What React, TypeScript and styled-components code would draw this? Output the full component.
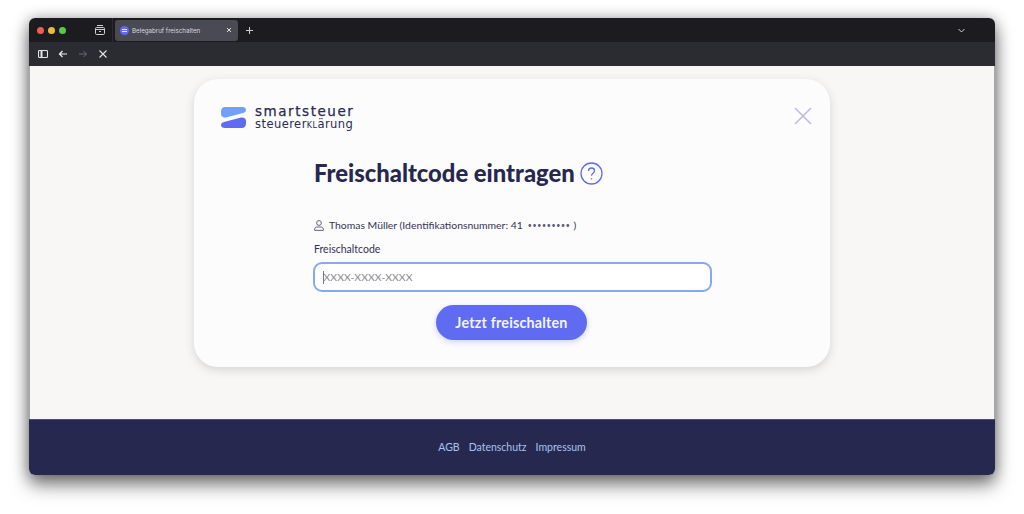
import React from "react";
import styled, { createGlobalStyle } from "styled-components";

const Global = createGlobalStyle`
  html, body { margin: 0; padding: 0; background: #ffffff; width: 1024px; height: 514px; overflow: hidden; }
  * { box-sizing: border-box; }
  body { font-family: "Lato", "Liberation Sans", sans-serif; }
`;

const Page = styled.div`
  width: 1024px;
  height: 514px;
  padding: 18px 29px 39px;
`;

const Win = styled.div`
  width: 966px;
  height: 457px;
  border-radius: 6px;
  overflow: hidden;
  display: flex;
  flex-direction: column;
  box-shadow: 0 10px 18px rgba(0, 0, 0, 0.5), 0 0 14px rgba(0, 0, 0, 0.3);
`;

const TabBar = styled.div`
  height: 24px;
  background: #1b1b20;
  display: flex;
  align-items: center;
  padding-left: 8px;
  flex: none;
`;

const Light = styled.span<{ $c: string }>`
  width: 7px;
  height: 7px;
  border-radius: 50%;
  background: ${(p) => p.$c};
  margin-right: 4px;
  flex: none;
`;

const TabGroupIcon = styled.svg`
  width: 12px;
  height: 12px;
  margin-left: 24px;
  flex: none;
`;

const Divider = styled.span`
  width: 1px;
  height: 24px;
  background: #2b2b31;
  margin-left: 6px;
  flex: none;
`;

const Tab = styled.div`
  width: 123px;
  height: 21px;
  margin-left: 2px;
  background: #4a4a55;
  border-radius: 3px;
  display: flex;
  align-items: center;
  padding: 0 5px;
  flex: none;
`;

const Favicon = styled.span`
  width: 9px;
  height: 9px;
  border-radius: 50%;
  background: #5f6cf0;
  display: flex;
  flex-direction: column;
  align-items: center;
  justify-content: center;
  gap: 1px;
  flex: none;
`;

const FavBar = styled.span`
  width: 5px;
  height: 1px;
  background: #e8eaff;
`;

const TabTitle = styled.span`
  font-family: "Inter", "Liberation Sans", sans-serif;
  font-size: 6.2px;
  color: #d8d8de;
  margin-left: 3px;
  flex: 1;
  white-space: nowrap;
`;

const Glyph = styled.svg<{ $ml?: number; $mr?: number }>`
  flex: none;
  margin-left: ${(p) => p.$ml ?? 0}px;
  margin-right: ${(p) => p.$mr ?? 0}px;
`;

const Spacer = styled.span`
  flex: 1;
`;

const ToolBar = styled.div`
  height: 24px;
  background: #2b2b32;
  display: flex;
  align-items: center;
  padding-left: 9px;
  flex: none;
`;

const Content = styled.div`
  height: 353px;
  background: #f8f7f5;
  border-left: 1px solid #a8a8a8;
  border-right: 1px solid #a8a8a8;
  padding-top: 13px;
  display: flex;
  justify-content: center;
  flex: none;
`;

const Card = styled.div`
  width: 636px;
  height: 288px;
  background: #fdfcfd;
  border-radius: 24px;
  box-shadow: 0 3px 10px rgba(60, 60, 70, 0.18);
  display: flex;
  flex-direction: column;
  padding: 26px 17px 0 27px;
`;

const CardHead = styled.div`
  display: flex;
  justify-content: space-between;
  align-items: flex-start;
`;

const Logo = styled.div`
  display: flex;
  align-items: center;
  gap: 9px;
`;

const LogoText = styled.div`
  display: flex;
  flex-direction: column;
  font-family: "DejaVu Sans", "Liberation Sans", sans-serif;
  color: #2a2a52;
`;

const LogoTop = styled.span`
  font-size: 13.5px;
  font-weight: 400;
  line-height: 13px;
  letter-spacing: 1.55px;
  -webkit-text-stroke: 0.25px #2a2a52;
`;

const LogoBottom = styled.span`
  font-size: 11.5px;
  font-weight: 400;
  line-height: 12px;
  letter-spacing: 0.45px;
`;

const LogoCaps = styled.span`
  font-variant: small-caps;
`;

const CloseIcon = styled.svg`
  width: 20px;
  height: 20px;
  margin-top: 1px;
`;

const Form = styled.div`
  width: 398px;
  margin-left: 93px;
  margin-top: 28px;
  display: flex;
  flex-direction: column;
`;

const TitleRow = styled.div`
  display: flex;
  align-items: center;
  gap: 5px;
  height: 30px;
`;

const Title = styled.h1`
  margin: 0;
  font-family: "Lato", sans-serif;
  font-size: 23.8px;
  font-weight: 900;
  color: #27274f;
  white-space: nowrap;
`;

const UserRow = styled.div`
  display: flex;
  align-items: center;
  margin-top: 29px;
  height: 16px;
  font-size: 10.4px;
  color: #33334f;
  white-space: nowrap;
`;

const UserName = styled.span`
  margin-left: 5px;
`;

const Masked = styled.span`
  font-size: 7px;
  letter-spacing: 0.7px;
  margin: 0 3px 0 5px;
  color: #555570;
`;

const Label = styled.label`
  font-size: 10.5px;
  color: #33334f;
  margin-top: 9px;
  height: 15px;
  line-height: 15px;
`;

const Field = styled.div`
  margin: 5px 0 0 -1px;
  height: 30px;
  border: 2.5px solid #86a8ec;
  border-radius: 9px;
  background: #ffffff;
  display: flex;
  align-items: center;
  padding-left: 7.5px;
  font-size: 10.4px;
  letter-spacing: 0.1px;
  color: #85858f;
`;

const Caret = styled.span`
  width: 1px;
  height: 13px;
  background: #777;
`;

const Submit = styled.button`
  align-self: center;
  margin: 13px 0 0 -3px;
  width: 151px;
  height: 35px;
  border: none;
  border-radius: 18px;
  background: #5f6cf2;
  color: #f4f4ff;
  font-family: "Lato", sans-serif;
  font-size: 14.3px;
  font-weight: 700;
  letter-spacing: 0.2px;
  box-shadow: 0 2px 6px rgba(95, 108, 242, 0.3);
`;

const Footer = styled.div`
  height: 56px;
  background: #27284f;
  border-top: 1px solid #4c4c70;
  display: flex;
  align-items: center;
  justify-content: center;
  gap: 9px;
  flex: none;
  padding-bottom: 1px;
`;

const FootLink = styled.a`
  font-size: 10.5px;
  color: #a8c4f0;
`;

export default function App() {
  return (
    <>
      <Global />
      <Page>
        <Win>
          <TabBar>
            <Light $c="#ec5f56" />
            <Light $c="#f0b73f" />
            <Light $c="#5bc64f" />
            <TabGroupIcon viewBox="0 0 12 12" fill="none" stroke="#cfcfd4" strokeWidth="1">
              <rect x="1.5" y="3.5" width="9" height="7" rx="1.2" />
              <path d="M3 1.5h6M1.5 5.5h9M5 7.5h2" />
            </TabGroupIcon>
            <Divider />
            <Tab>
              <Favicon>
                <FavBar />
                <FavBar />
              </Favicon>
              <TabTitle>Belegabruf freischalten</TabTitle>
              <Glyph width="8" height="8" viewBox="0 0 8 8" stroke="#e0e0e4" strokeWidth="1" fill="none">
                <path d="M2 2l4 4M6 2l-4 4" />
              </Glyph>
            </Tab>
            <Glyph $ml={7} width="9" height="9" viewBox="0 0 9 9" stroke="#cfcfd4" strokeWidth="1" fill="none">
              <path d="M4.5 1v7M1 4.5h7" />
            </Glyph>
            <Spacer />
            <Glyph $mr={29} width="9" height="9" viewBox="0 0 9 9" stroke="#cfcfd4" strokeWidth="1" fill="none">
              <path d="M1.5 3l3 3 3-3" />
            </Glyph>
          </TabBar>
          <ToolBar>
            <Glyph width="10" height="10" viewBox="0 0 10 10" fill="none" stroke="#e4e4e8" strokeWidth="1.1">
              <rect x="0.5" y="1.5" width="9" height="7" rx="1" />
              <path d="M3.5 1.5v7" strokeWidth="2" />
            </Glyph>
            <Glyph $ml={10} width="10" height="10" viewBox="0 0 10 10" fill="none" stroke="#f0f0f4" strokeWidth="1.2">
              <path d="M9 5H1.5M4.5 2L1.5 5l3 3" />
            </Glyph>
            <Glyph $ml={10} width="10" height="10" viewBox="0 0 10 10" fill="none" stroke="#6a6a72" strokeWidth="1">
              <path d="M1 5h7.5M5.5 2l3 3-3 3" />
            </Glyph>
            <Glyph $ml={10} width="10" height="10" viewBox="0 0 10 10" fill="none" stroke="#e4e4e8" strokeWidth="1.1">
              <path d="M1.5 1.5l7 7M8.5 1.5l-7 7" />
            </Glyph>
          </ToolBar>
          <Content>
            <Card>
              <CardHead>
                <Logo>
                  <svg width="25" height="21" viewBox="0 0 25 21">
                    <path d="M4 0H21c2.5 0 4 1.2 4 3 0 1.6-1.3 2.6-3 3L5 10.5C2 11 0 9.5 0 7V4.5C0 2 1.5 0 4 0z" fill="#6ea2f8" />
                    <path d="M4 0H21c2.5 0 4 1.2 4 3 0 1.6-1.3 2.6-3 3L5 10.5C2 11 0 9.5 0 7V4.5C0 2 1.5 0 4 0z" fill="#5f6cf2" transform="rotate(180 12.5 10.5)" />
                  </svg>
                  <LogoText>
                    <LogoTop>smartsteuer</LogoTop>
                    <LogoBottom>steuerer<LogoCaps>kl</LogoCaps>ärung</LogoBottom>
                  </LogoText>
                </Logo>
                <CloseIcon viewBox="0 0 20 20" fill="none" stroke="#b9b6ee" strokeWidth="1.5">
                  <path d="M2 2l16 16M18 2L2 18" />
                </CloseIcon>
              </CardHead>
              <Form>
                <TitleRow>
                  <Title>Freischaltcode eintragen</Title>
                  <svg width="23" height="23" viewBox="0 0 23 23" fill="none" stroke="#5f6cf2" strokeWidth="1.3">
                    <circle cx="11.5" cy="11.5" r="10.5" />
                    <path d="M8.5 9c0-1.8 1.3-3 3-3s3 1.2 3 2.8c0 2.4-3 2.4-3 5" />
                    <path d="M11.5 16.2v1.3" />
                  </svg>
                </TitleRow>
                <UserRow>
                  <svg width="10" height="11" viewBox="0 0 10 11" fill="none" stroke="#55556e" strokeWidth="0.9">
                    <circle cx="5" cy="3" r="2.4" />
                    <path d="M0.7 10.4V9c0-1.3 1-2 2.2-2h4.2c1.2 0 2.2.7 2.2 2v1.4z" />
                  </svg>
                  <UserName>Thomas Müller (Identifikationsnummer: 41</UserName>
                  <Masked>•••••••••</Masked>
                  <span>)</span>
                </UserRow>
                <Label>Freischaltcode</Label>
                <Field>
                  <Caret />
                  XXXX-XXXX-XXXX
                </Field>
                <Submit>Jetzt freischalten</Submit>
              </Form>
            </Card>
          </Content>
          <Footer>
            <FootLink>AGB</FootLink>
            <FootLink>Datenschutz</FootLink>
            <FootLink>Impressum</FootLink>
          </Footer>
        </Win>
      </Page>
    </>
  );
}
